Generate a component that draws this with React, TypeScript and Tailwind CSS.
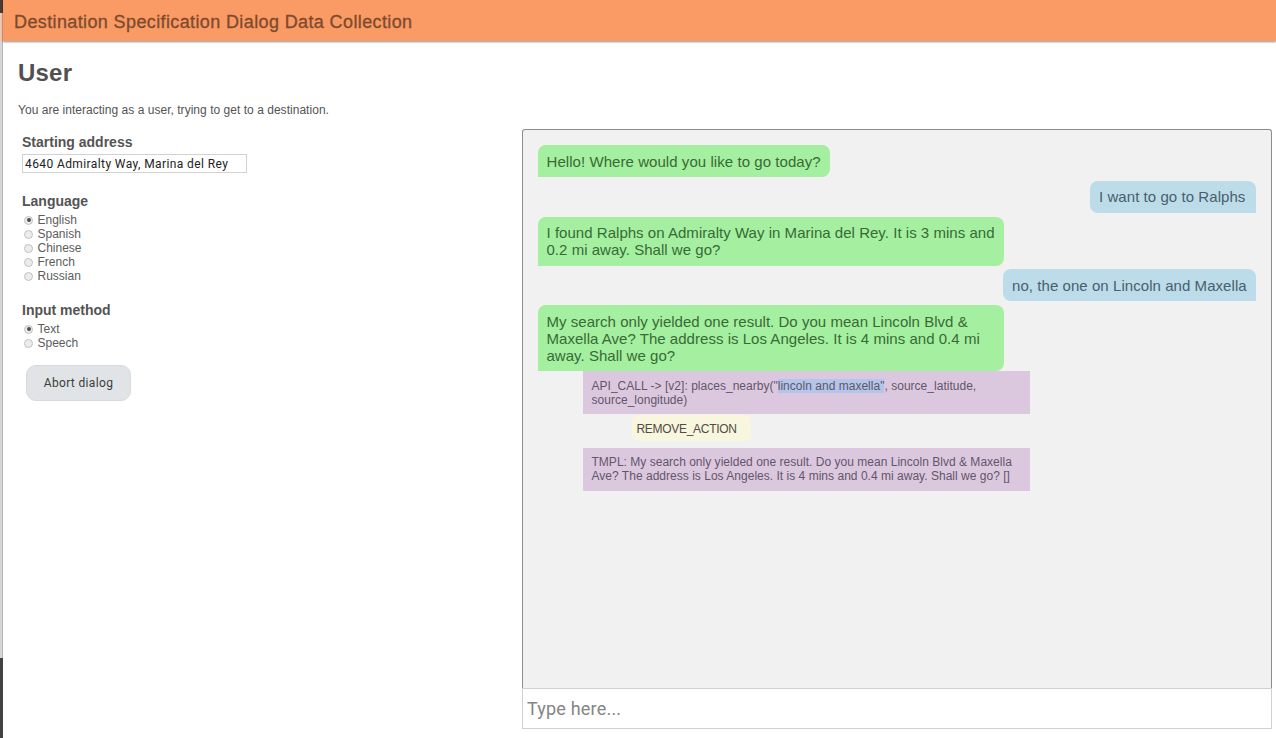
import { useState, type ReactNode } from "react";

const LANGUAGES = ["English", "Spanish", "Chinese", "French", "Russian"];
const METHODS = ["Text", "Speech"];

function Radio({ label, checked, onSelect }: { label: string; checked: boolean; onSelect: () => void }) {
  return (
    <button type="button" role="radio" aria-checked={checked} onClick={onSelect} className="flex h-3.5 items-center text-[12px] leading-[14px] text-[#5c5c5c]">
      <span className="mr-[4.5px] ml-[2px] flex size-[9px] items-center justify-center rounded-full border border-[#c2c2c2] bg-[#ececec]">
        {checked && <span className="size-[4px] rounded-full bg-[#505050]" />}
      </span>
      {label}
    </button>
  );
}

function RadioGroup({ title, options, className }: { title: string; options: string[]; className: string }) {
  const [value, setValue] = useState(options[0]);
  return (
    <div role="radiogroup" className={className}>
      <h2 className="mb-1 text-[14px] leading-4 font-bold">{title}</h2>
      <div className="flex flex-col">
        {options.map((o) => (
          <Radio key={o} label={o} checked={o === value} onSelect={() => setValue(o)} />
        ))}
      </div>
    </div>
  );
}

function Agent({ children, className }: { children: ReactNode; className: string }) {
  return (
    <div className={`${className} self-start rounded-lg rounded-bl-none bg-[#a5efa0] px-[8.5px] text-[15px] leading-[17px] whitespace-nowrap text-[#376b36]`}>
      {children}
    </div>
  );
}

function User({ children, className }: { children: ReactNode; className: string }) {
  return (
    <div className={`${className} h-8 self-end rounded-lg rounded-br-none bg-[#bcdcea] pl-[9px] text-[15px] leading-[17px] tracking-[0.06px] whitespace-nowrap text-[#49606c]`}>
      {children}
    </div>
  );
}

function Action({ children, className }: { children: ReactNode; className: string }) {
  return (
    <div className={`${className} ml-[45px] h-[43px] w-[447px] bg-[#dcc8de] pl-[8.5px] text-[12px] leading-[14px] tracking-[0.02px] whitespace-nowrap text-[#62566a]`}>
      {children}
    </div>
  );
}

export default function App() {
  return (
    <div className="flex h-[738px] w-[1276px] overflow-hidden bg-white font-['Liberation_Sans',Arial,sans-serif] text-[#545454]">
      <div className="flex w-[3px] shrink-0 flex-col">
        <div className="h-[13px] bg-[#4a3b35]" />
        <div className="h-[28px] border-r border-[#f0a57c] bg-[#efc7b3]" />
        <div className="h-[617px] border-r border-[#b4b4b4] bg-[#d6d6d6]" />
        <div className="flex-1 bg-[#404244]" />
      </div>
      <div className="flex min-w-0 flex-1 flex-col">
        <header className="z-10 flex h-[41px] shrink-0 items-center bg-[#fa9a65] pt-[3px] pl-[11px] shadow-[0_1px_2px_rgba(0,0,0,0.45)]">
          <h1 className="text-[18px] leading-5 tracking-[0.38px] text-[#7d4a2c] [-webkit-text-stroke:0.3px_#7d4a2c]">
            Destination Specification Dialog Data Collection
          </h1>
        </header>
        <main className="flex flex-1">
          <section className="w-[519px] shrink-0 pl-[15px]">
            <h1 className="mt-[18px] text-[24px] leading-7 font-bold tracking-[0.2px] text-[#505050]">User</h1>
            <p className="mt-4 text-[12px] leading-[14px] tracking-[0.03px]">You are interacting as a user, trying to get to a destination.</p>
            <div className="mt-[17px] flex flex-col items-start pl-1">
              <h2 className="text-[14px] leading-4 font-bold">Starting address</h2>
              <input
                defaultValue="4640 Admiralty Way, Marina del Rey"
                className="mt-[4px] h-[19px] w-[225px] border border-[#d2d2d2] bg-white px-[2px] font-[Roboto,sans-serif] text-[12px] tracking-[0.4px] text-[#222] outline-none"
              />
              <RadioGroup className="mt-5" title="Language" options={LANGUAGES} />
              <RadioGroup className="mt-[19px]" title="Input method" options={METHODS} />
              <button type="button" className="mt-[15px] ml-1 h-9 w-[105px] rounded-[10px] border border-[#d6dadd] bg-[#e0e4e7] font-[Roboto,sans-serif] text-[12px] tracking-[0.35px] text-[#3c3c3c]">
                Abort dialog
              </button>
            </div>
          </section>
          <section className="flex w-[750px] flex-col pt-[88px]">
            <div className="flex h-[559px] flex-col rounded-t-[3px] border border-b-0 border-[#8c8c8c] bg-[#f1f1f1] pt-[15px] pr-[15px] pl-[15px]">
              <Agent className="h-8 w-[292px] pt-2 tracking-[0.06px]">Hello! Where would you like to go today?</Agent>
              <User className="mt-1 w-[166px] pt-[7px]">I want to go to Ralphs</User>
              <Agent className="mt-1 h-[49px] w-[466px] pt-[7px] tracking-[0.03px]">
                I found Ralphs on Admiralty Way in Marina del Rey. It is 3 mins and
                <br />
                0.2 mi away. Shall we go?
              </Agent>
              <User className="mt-[3px] w-[253px] pt-2">no, the one on Lincoln and Maxella</User>
              <Agent className="mt-1 h-[66px] w-[466px] pt-2 tracking-[0.03px]">
                My search only yielded one result. Do you mean Lincoln Blvd &amp;
                <br />
                Maxella Ave? The address is Los Angeles. It is 4 mins and 0.4 mi
                <br />
                away. Shall we go?
              </Agent>
              <Action className="pt-2">
                API_CALL -&gt; [v2]: places_nearby("<span className="bg-[#b3c5ea]">lincoln and maxella"</span>, source_latitude,
                <br />
                source_longitude)
              </Action>
              <div className="mt-px ml-[94px] h-[26px] w-[119px] rounded-md bg-[#f9f6de] pt-[7px] pl-[4.5px] text-[12px] leading-[14px] tracking-[-0.3px] text-[#4f4b45]">
                REMOVE_ACTION
              </div>
              <Action className="mt-[7px] pt-[7px]">
                TMPL: My search only yielded one result. Do you mean Lincoln Blvd &amp; Maxella
                <br />
                Ave? The address is Los Angeles. It is 4 mins and 0.4 mi away. Shall we go? []
              </Action>
            </div>
            <input
              placeholder="Type here..."
              className="h-[41px] w-full border border-[#d0d0d0] bg-white px-1 font-[Roboto,sans-serif] text-[18px] tracking-[0.2px] outline-none placeholder:text-[#858585] placeholder:opacity-100"
            />
          </section>
        </main>
      </div>
    </div>
  );
}
